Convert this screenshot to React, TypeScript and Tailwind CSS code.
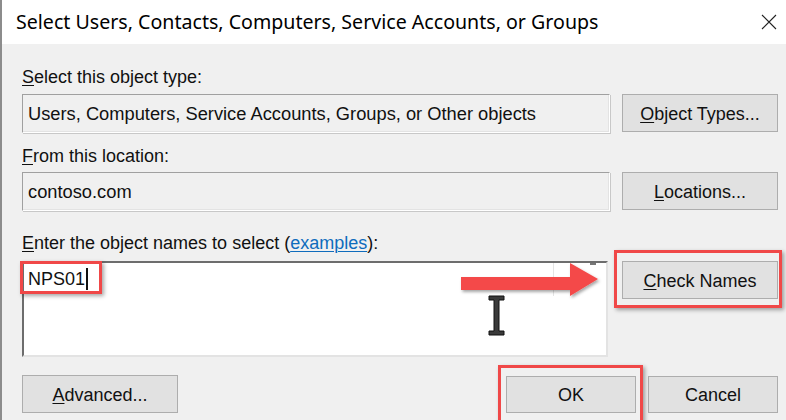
import React from "react";

const btn =
  "h-[38px] w-[156px] bg-[#e1e1e1] border border-[#adadad] flex items-center justify-center pt-[3px] text-[18px] text-[#111]";

function Field({ children }: { children: React.ReactNode }) {
  return (
    <div className="h-[39px] flex-1 border border-t-[#a0a0a0] border-l-[#a0a0a0] border-b-white border-r-white bg-[#f0f0f0] flex items-center px-[5px] shadow-[inset_-1px_-1px_0_#e3e3e3,1px_1px_0_#c8c8c8]">
      <span className="text-[18.3px] text-[#111]">{children}</span>
    </div>
  );
}

function U({ c }: { c: string }) {
  return <span className="underline decoration-1 underline-offset-2">{c}</span>;
}

export default function App() {
  return (
    <div
      className="w-[786px] h-[420px] overflow-hidden relative bg-[#f0f0f0] border-l-2 border-[#8c8c8c] flex flex-col"
      style={{ fontFamily: '"Liberation Sans", Arial, sans-serif' }}
    >
      {/* Title bar */}
      <div className="h-[44px] bg-white flex items-center justify-between pl-[14px] pr-[8px] shrink-0">
        <span
          className="text-[19.6px] text-black"
          style={{ fontFamily: '"Noto Sans", sans-serif' }}
        >
          Select Users, Contacts, Computers, Service Accounts, or Groups
        </span>
        <svg width="16" height="16" viewBox="0 0 16 16" className="mr-[1px]">
          <path d="M1 1 L15 15 M15 1 L1 15" stroke="#222" strokeWidth="1.1" />
        </svg>
      </div>

      {/* Body */}
      <div className="flex flex-col pl-[20px] pr-[8px]">
        <div className="mt-[23px] h-[20px] leading-[20px] text-[18px] text-[#111]">
          <U c="S" />elect this object type:
        </div>
        <div className="mt-[7px] flex gap-[12px] items-start">
          <Field>Users, Computers, Service Accounts, Groups, or Other objects</Field>
          <div className={btn}>
            <span>
              <U c="O" />bject Types...
            </span>
          </div>
        </div>

        <div className="mt-[13px] h-[20px] leading-[20px] text-[18px] text-[#111]">
          <U c="F" />rom this location:
        </div>
        <div className="mt-[6px] flex gap-[12px] items-start">
          <Field>contoso.com</Field>
          <div className={btn}>
            <span>
              <U c="L" />ocations...
            </span>
          </div>
        </div>

        <div className="mt-[22px] h-[20px] leading-[20px] text-[18px] text-[#111]">
          <U c="E" />nter the object names to select (
          <span className="text-[#0f6cbd] underline decoration-1 underline-offset-2">examples</span>
          ):
        </div>
        <div className="mt-[8px] flex gap-[14px] items-start">
          <div className="h-[96px] w-[586px] bg-white border-2 border-t-[#6d6d6d] border-l-[#6d6d6d] border-b-[#e3e3e3] border-r-[#e3e3e3] flex pl-[4px] pt-[5px]">
            <span className="text-[18px] text-[#111] leading-[22px]">NPS01</span>
            <span className="w-[2px] h-[22px] bg-[#111] ml-[1px]" />
            <div className="ml-auto flex h-[33px] -mt-[5px]">
              <div className="w-px bg-[#e4e4e4] mr-[36px]" />
              <div className="w-[6px] h-[2px] bg-[#777] mr-[10px]" />
            </div>
          </div>
          <div className={btn}>
            <span>
              <U c="C" />heck Names
            </span>
          </div>
        </div>

        <div className="mt-[18px] flex items-center">
          <div className={btn + " h-[37px]"}>
            <span>
              <U c="A" />dvanced...
            </span>
          </div>
          <div className="ml-auto flex gap-[12px]">
            <div className="h-[37px] w-[130px] bg-[#e1e1e1] border border-[#adadad] flex items-center justify-center pt-[3px] text-[18px] text-[#111]">
              OK
            </div>
            <div className="h-[37px] w-[130px] bg-[#e1e1e1] border border-[#adadad] flex items-center justify-center pt-[3px] text-[18px] text-[#111]">
              Cancel
            </div>
          </div>
        </div>
      </div>

      {/* Red highlights */}
      <div className="absolute left-[18px] top-[261px] w-[82px] h-[33px] border-[3px] border-[#f04848] shadow-[2px_2px_4px_rgba(0,0,0,0.35)]" />
      <div className="absolute left-[612px] top-[250px] w-[168px] h-[58px] border-[3px] border-[#f04848] shadow-[2px_2px_4px_rgba(0,0,0,0.35)]" />
      <div className="absolute left-[496px] top-[365px] w-[145px] h-[58px] border-[3px] border-[#f04848] shadow-[2px_2px_4px_rgba(0,0,0,0.35)]" />

      {/* Arrow */}
      <svg
        className="absolute left-[456px] top-[260px]"
        width="146"
        height="40"
        viewBox="0 0 146 40"
      >
        <defs>
          <filter id="sh" x="-10%" y="-20%" width="130%" height="160%">
            <feDropShadow dx="1.5" dy="2" stdDeviation="1.5" floodColor="#000" floodOpacity="0.35" />
          </filter>
        </defs>
        <path
          d="M3 17 L112 17 L112 3 L140 19 L112 36 L112 30 L3 30 Z"
          fill="#f44848"
          filter="url(#sh)"
        />
      </svg>

      {/* I-beam cursor */}
      <svg
        className="absolute left-[485px] top-[295px]"
        width="20"
        height="42"
        viewBox="0 0 20 42"
      >
        <path
          d="M2 1 H17 V5 H12 V36 H17 V40 H2 V36 H7 V5 H2 Z"
          fill="#3a3a3a"
          stroke="#111"
          strokeWidth="1"
        />
      </svg>
    </div>
  );
}
